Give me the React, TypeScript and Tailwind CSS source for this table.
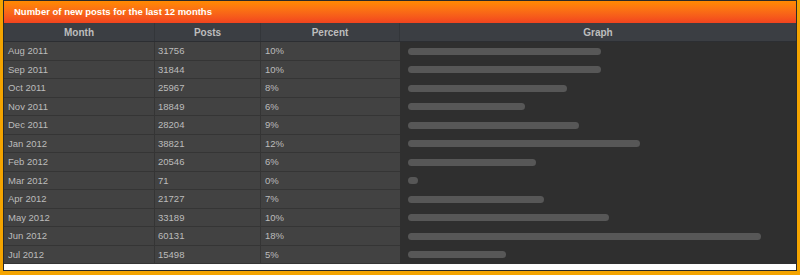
const rows = [
  { month: "Aug 2011", posts: "31756", pct: "10%", w: 193 },
  { month: "Sep 2011", posts: "31844", pct: "10%", w: 193 },
  { month: "Oct 2011", posts: "25967", pct: "8%", w: 159 },
  { month: "Nov 2011", posts: "18849", pct: "6%", w: 117 },
  { month: "Dec 2011", posts: "28204", pct: "9%", w: 171 },
  { month: "Jan 2012", posts: "38821", pct: "12%", w: 232 },
  { month: "Feb 2012", posts: "20546", pct: "6%", w: 128 },
  { month: "Mar 2012", posts: "71", pct: "0%", w: 10 },
  { month: "Apr 2012", posts: "21727", pct: "7%", w: 136 },
  { month: "May 2012", posts: "33189", pct: "10%", w: 201 },
  { month: "Jun 2012", posts: "60131", pct: "18%", w: 353 },
  { month: "Jul 2012", posts: "15498", pct: "5%", w: 98 },
];

const cols = "grid grid-cols-[151px_106px_139px_1fr]";

export default function App() {
  return (
    <div className="w-[800px] h-[275px] bg-[#f4a400] px-[3px] pb-[4px] font-['Liberation_Sans',Arial,sans-serif]">
      <div className="h-full flex flex-col border border-[#2a2a2a] bg-white">
        {/* title bar */}
        <div className="h-[22px] shrink-0 flex items-center pl-[10px] pt-[1px] bg-gradient-to-b from-[#ff8a00] to-[#f2431f] text-white text-[9.5px] font-bold">
          Number of new posts for the last 12 months
        </div>

        {/* column headings */}
        <div className={`${cols} h-[19px] shrink-0 bg-[#3b3e43] border-b border-[#2c2e32] text-[#bdbdbd] text-[10px] font-bold`}>
          <div className="flex items-center justify-center pt-[1px] border-r border-[#33363a]">Month</div>
          <div className="flex items-center justify-center pt-[1px] border-r border-[#33363a]">Posts</div>
          <div className="flex items-center justify-center pt-[1px] border-r border-[#33363a]">Percent</div>
          <div className="flex items-center justify-center pt-[1px]">Graph</div>
        </div>

        {/* rows */}
        <div className="flex flex-col">
          {rows.map((r) => (
            <div key={r.month} className={`${cols} h-[18.5px] text-[#bcbcbc] text-[9.5px]`}>
              <div className="flex items-center pl-[4px] pt-[1px] bg-[#424242] border-b border-r border-[#353535]">{r.month}</div>
              <div className="flex items-center pl-[3px] pt-[1px] bg-[#424242] border-b border-r border-[#353535]">{r.posts}</div>
              <div className="flex items-center pl-[4px] pt-[1px] bg-[#424242] border-b border-[#353535]">{r.pct}</div>
              <div className="flex items-center pl-[8px] bg-[#2f2f2f]">
                <div className="h-[7px] rounded-full bg-[#575757]" style={{ width: r.w }} />
              </div>
            </div>
          ))}
        </div>
      </div>
    </div>
  );
}
